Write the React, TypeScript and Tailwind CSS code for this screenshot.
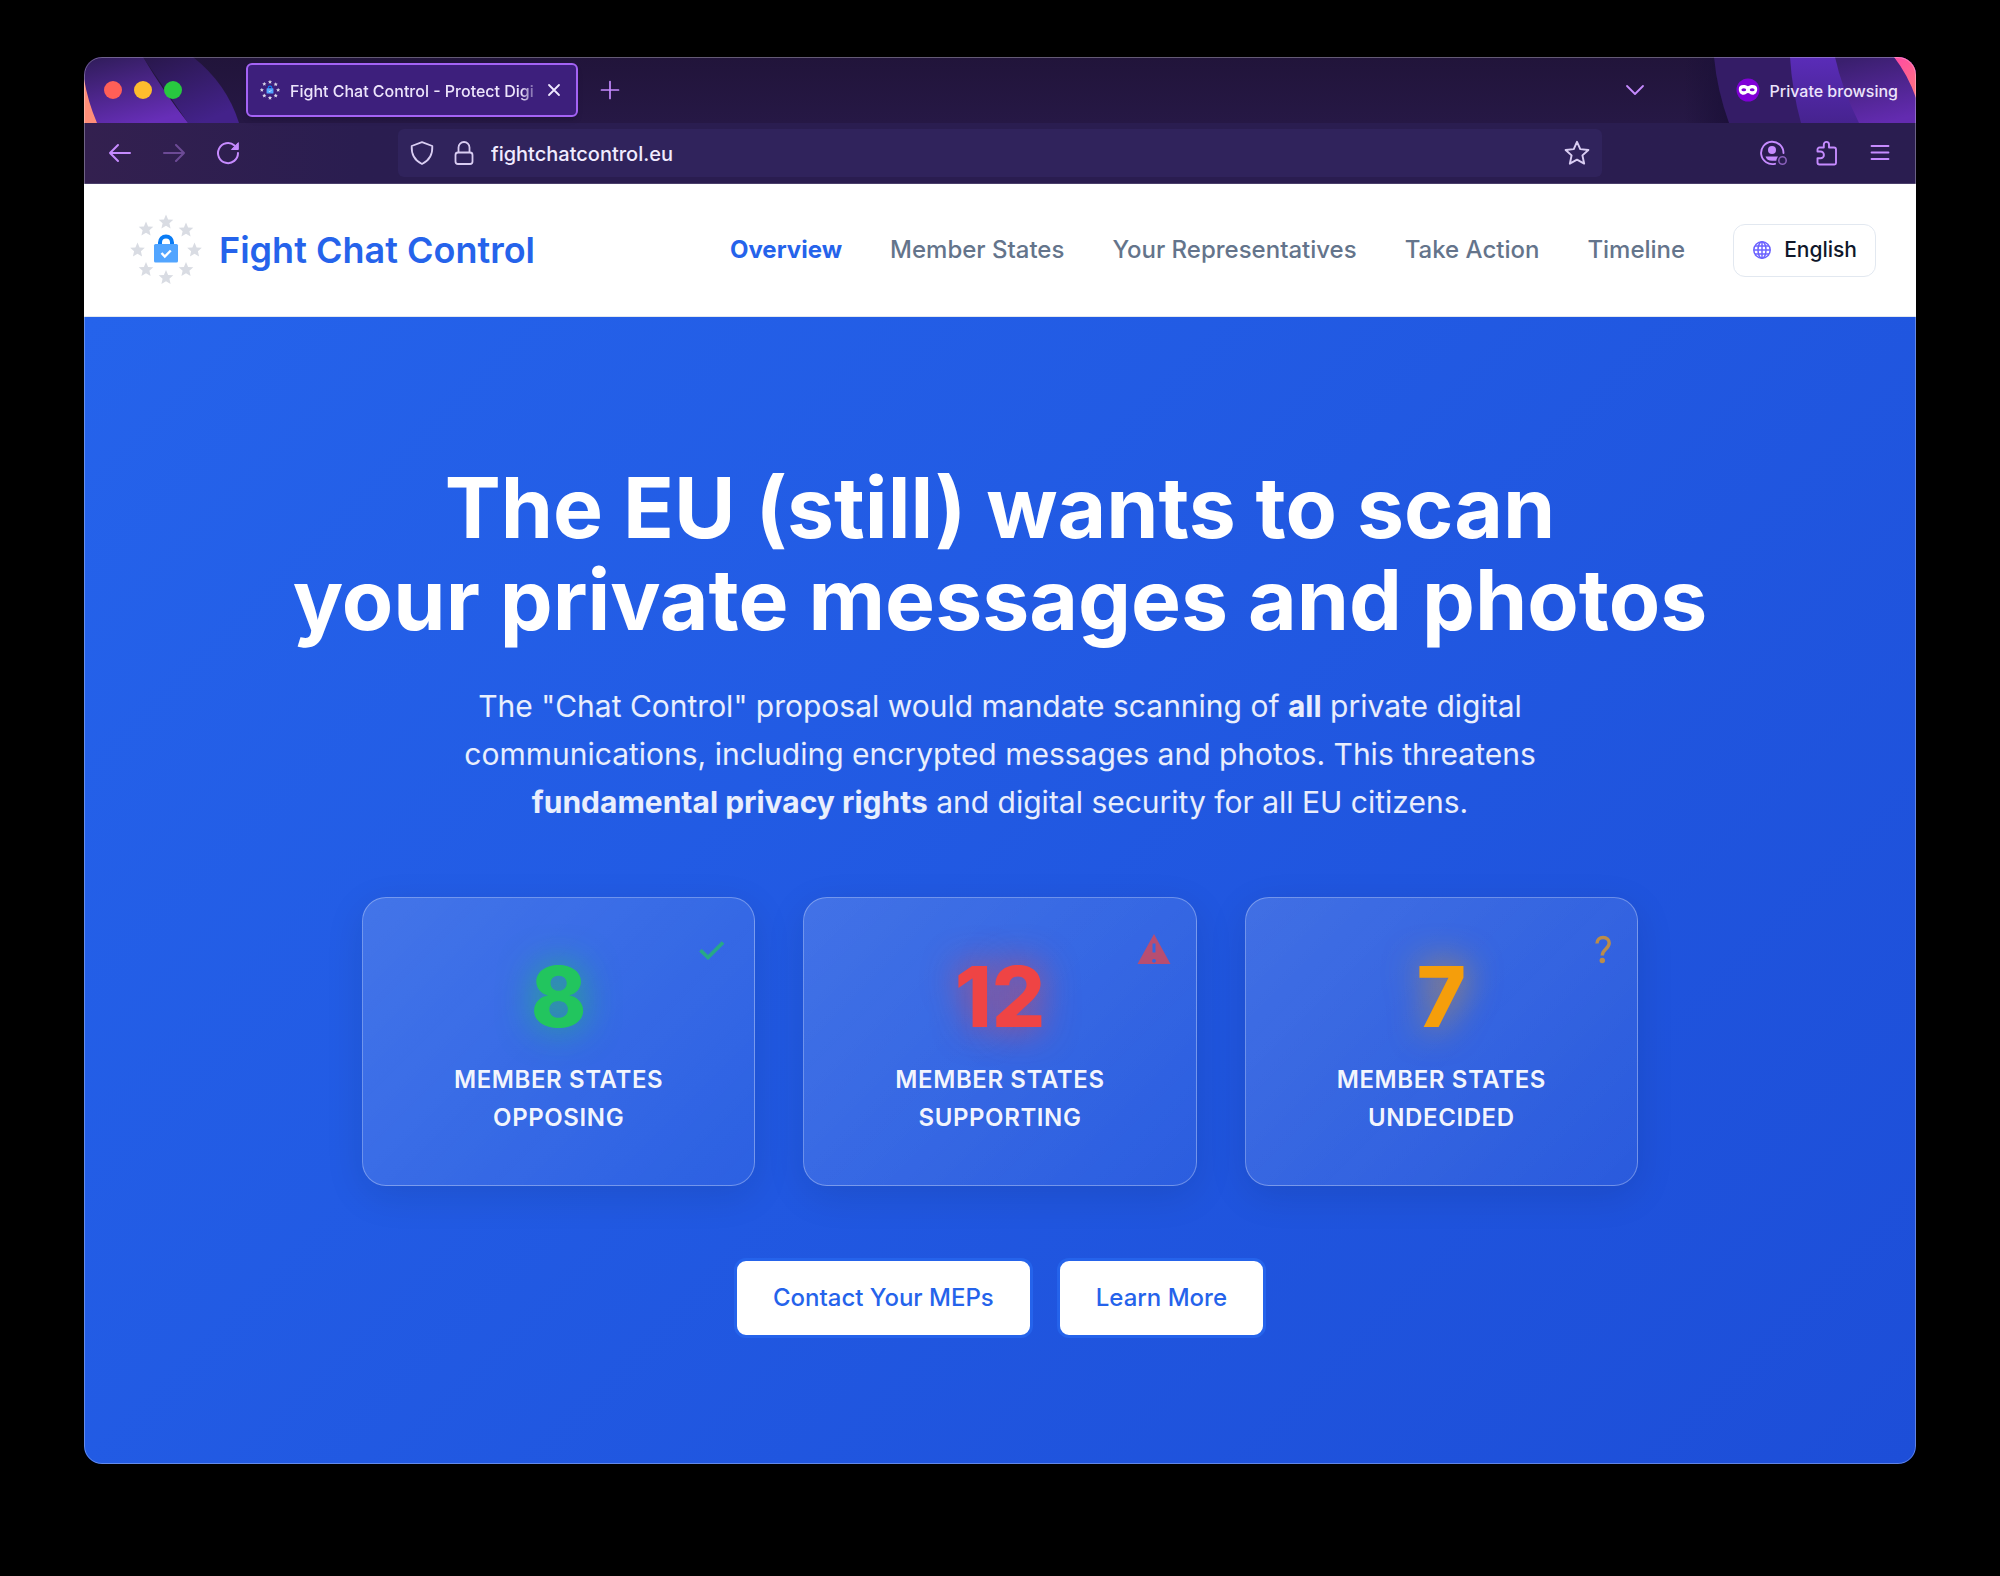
const navItems = ["Overview", "Member States", "Your Representatives", "Take Action", "Timeline"];

const stats = [
  {
    value: "8",
    label: "Opposing",
    number: "text-[#22c55e] [text-shadow:0_0_36px_rgba(34,197,94,0.8)]",
    icon: <CheckIcon />,
  },
  {
    value: "12",
    label: "Supporting",
    number: "text-[#ef4444] [text-shadow:0_0_36px_rgba(239,68,68,0.8)]",
    icon: <WarningIcon />,
  },
  {
    value: "7",
    label: "Undecided",
    number: "text-[#f59e0b] [text-shadow:0_0_36px_rgba(245,158,11,0.8)]",
    icon: <QuestionIcon />,
  },
];

function CheckIcon() {
  return (
    <svg viewBox="0 0 36 36" className="size-9" fill="none" stroke="#22c55e" strokeWidth="3.600">
      <path d="m6.500 18.200 7.500 7.300L29 10.500" />
    </svg>
  );
}

function WarningIcon() {
  return (
    <svg viewBox="0 0 36 36" className="size-9 fill-[#ef4444]">
      <path d="M1.500 32h33L18 2 1.500 32zM19.800 28.200a1.900 1.900 0 1 1-3.600 0 1.900 1.900 0 0 1 3.600 0zM19.500 20.500h-3v-9h3v9z" fillRule="evenodd" />
    </svg>
  );
}

function QuestionIcon() {
  return (
    <svg viewBox="0 0 20 36" className="h-9 w-5">
      <path
        d="M4 11.500c0-4 2.800-6 6.200-6s6 2.200 6 5.600c0 5.800-6.900 6.200-6.900 12.400"
        fill="none"
        stroke="#f59e0b"
        strokeWidth="3.400"
      />
      <circle cx="9.300" cy="28.500" r="2.700" fill="#f59e0b" />
    </svg>
  );
}

const starPath =
  "M0-7.500 2.100-2.600 7.300-2.200 3.400 1.300 4.600 6.500 0 3.800-4.600 6.500-3.400 1.300-7.300-2.200-2.100-2.600z";

const starSpots = [
  [42, 14], [62, 22], [70.5, 42], [62, 61.5], [42, 69.500], [22, 61.5], [13.500, 42], [22, 21],
];

function Logo({ className, star }: { className: string; star: string }) {
  return (
    <svg viewBox="0 0 84 84" className={className} aria-hidden="true">
      {starSpots.map(([x, y]) => (
        <path key={`${x}-${y}`} d={starPath} transform={`translate(${x} ${y})`} fill={star} />
      ))}
      <path d="M36 37v-2.500a6 6 0 0 1 12 0V37" fill="none" stroke="#0a7cf5" strokeWidth="4" />
      <rect x="30" y="36" width="24" height="18.500" rx="1.500" fill="#52a5ff" />
      <path d="m37.500 45 3.300 3.500 6-6" fill="none" stroke="#fff" strokeWidth="2.400" />
    </svg>
  );
}

function GlobeIcon() {
  return (
    <svg viewBox="0 0 20 20" className="size-5" fill="none" stroke="#6c63ff" strokeWidth="1.500">
      <circle cx="10" cy="10" r="8.200" />
      <ellipse cx="10" cy="10" rx="4" ry="8.200" />
      <path d="M10 1.800v16.400M1.800 10h16.400M3 6h14M3 14h14" />
    </svg>
  );
}

function TabBar() {
  return (
    <div className="relative flex h-[66px] items-center bg-gradient-to-b from-[#21143a] to-[#261845]">
      {/* theme artwork behind the bar's content */}
      <svg className="absolute left-0 top-0 h-[66px] w-[160px]" viewBox="0 0 160 66" aria-hidden="true">
        <defs>
          <linearGradient id="bandA" x1="0.2" y1="0" x2="0.6" y2="1">
            <stop offset="0" stopColor="#321d5e" />
            <stop offset="1" stopColor="#672eb8" />
          </linearGradient>
          <linearGradient id="bandB" x1="0" y1="0" x2="0.6" y2="1">
            <stop offset="0" stopColor="#28174a" />
            <stop offset="1" stopColor="#43228a" />
          </linearGradient>
        </defs>
        <path d="M59 0h50q34 27 46 66h-51z" fill="url(#bandB)" />
        <path d="M0 0h59q20 34 45 66H0z" fill="url(#bandA)" />
        <path d="M0 22q4 23 13 44H0z" fill="#ff8e78" />
      </svg>
      <svg className="absolute right-0 top-0 h-[66px] w-[232px]" viewBox="0 0 232 66" aria-hidden="true">
        <defs>
          <linearGradient id="shade">
            <stop offset="0" stopColor="#1b1038" stopOpacity="0" />
            <stop offset="1" stopColor="#1b1038" />
          </linearGradient>
          <linearGradient id="bandC" x1="0" y1="0" x2="0" y2="1">
            <stop offset="0" stopColor="#5a2cb8" />
            <stop offset="1" stopColor="#46238f" />
          </linearGradient>
          <linearGradient id="bandD" x1="0.3" y1="0" x2="0.6" y2="1">
            <stop offset="0" stopColor="#3a1f6e" />
            <stop offset="1" stopColor="#632bb0" />
          </linearGradient>
          <linearGradient id="bandE" x1="0" y1="0" x2="0.5" y2="1">
            <stop offset="0" stopColor="#ff4aa5" />
            <stop offset="1" stopColor="#ff6f83" />
          </linearGradient>
        </defs>
        <path d="M0 0h50v66H0z" fill="url(#shade)" />
        <path d="M30 0h202v66H45Q33 33 30 0z" fill="#341c66" />
        <path d="M106 0h126v66H117Q108 33 106 0z" fill="url(#bandC)" />
        <path d="M151 0h81v66h-57Q158 32 151 0z" fill="url(#bandD)" />
        <path d="M210 0h22v41Q224 18 210 0z" fill="url(#bandE)" />
      </svg>

      <div className="relative flex w-[162px] items-center gap-3 pl-5">
        <button aria-label="Close window" className="size-[18px] rounded-full bg-[#ff5f57]" />
        <button aria-label="Minimise window" className="size-[18px] rounded-full bg-[#febc2e]" />
        <button aria-label="Zoom window" className="size-[18px] rounded-full bg-[#28c840]" />
      </div>

      <div className="relative flex h-[54px] w-[332px] items-center rounded-md border-2 border-[#a463f5] bg-[#3d1f7c] pl-[10px] pr-[14px] shadow-md">
        <Logo className="mr-2 size-6 shrink-0" star="#d9d5e8" />
        <span className="min-w-0 flex-1 overflow-hidden whitespace-nowrap pt-[2px] text-[16px] font-medium text-[#ece4fb] [mask-image:linear-gradient(to_right,#000_92%,transparent)]">
          Fight Chat Control - Protect Digi
        </span>
        <button aria-label="Close tab" className="ml-[5px] text-[#f0e9ff]">
          <svg viewBox="0 0 16 16" className="size-4" fill="none" stroke="currentColor" strokeWidth="1.800" strokeLinecap="round">
            <path d="m3 3 10 10M13 3 3 13" />
          </svg>
        </button>
      </div>

      <button aria-label="New tab" className="relative ml-[22px] text-[#c68bff]">
        <svg viewBox="0 0 20 20" className="size-5" fill="none" stroke="currentColor" strokeWidth="1.700" strokeLinecap="round">
          <path d="M10 1.500v17M1.500 10h17" />
        </svg>
      </button>

      <button aria-label="List all tabs" className="relative ml-auto mr-[91px] text-[#c68bff]">
        <svg viewBox="0 0 20 20" className="size-5" fill="none" stroke="currentColor" strokeWidth="1.800" strokeLinecap="round" strokeLinejoin="round">
          <path d="m2 6 8 8 8-8" />
        </svg>
      </button>

      <div className="relative flex items-center gap-[10px] pr-[18px]">
        <svg viewBox="0 0 24 24" className="size-6" aria-hidden="true">
          <circle cx="12" cy="12" r="11.500" fill="#8000d7" />
          <path
            d="M12 8.300C10.500 7.300 9 7 7.300 7 4.500 7 2.800 8.300 2.800 11c0 3.300 1.900 5.800 4.600 5.800 2.300 0 2.900-1.900 4.600-1.900s2.300 1.900 4.600 1.900c2.700 0 4.600-2.500 4.600-5.800 0-2.700-1.700-4-4.500-4-1.700 0-3.200.3-4.700 1.300z"
            fill="#fff"
          />
          <ellipse cx="7.800" cy="11.800" rx="2.400" ry="1.500" fill="#8000d7" />
          <ellipse cx="16.200" cy="11.800" rx="2.400" ry="1.500" fill="#8000d7" />
        </svg>
        <span className="pt-[2px] text-[16px] font-medium text-[#ece4fb]">Private browsing</span>
      </div>
    </div>
  );
}

function Toolbar() {
  return (
    <div className="flex h-[61px] items-center border-b border-[#4a3f6b] bg-gradient-to-r from-[#33204f] via-[#2a1d50] via-15% to-[#2a1d50] text-[#c68bff]">
      <div className="flex w-[314px] items-center gap-[30px] pl-6">
        <button aria-label="Back">
          <svg viewBox="0 0 24 24" className="size-6" fill="none" stroke="currentColor" strokeWidth="2" strokeLinecap="round" strokeLinejoin="round">
            <path d="M22 12H2m8-8-8 8 8 8" />
          </svg>
        </button>
        <button aria-label="Forward" className="opacity-40">
          <svg viewBox="0 0 24 24" className="size-6" fill="none" stroke="currentColor" strokeWidth="2" strokeLinecap="round" strokeLinejoin="round">
            <path d="M2 12h20m-8-8 8 8-8 8" />
          </svg>
        </button>
        <button aria-label="Reload">
          <svg viewBox="0 0 24 24" className="size-6" fill="none" stroke="currentColor" strokeWidth="2" strokeLinecap="round">
            <path d="M22 12A10 10 0 1 1 18.500 4.500" />
            <path d="M22.300 2v6.500h-6.500z" fill="currentColor" strokeWidth="1" strokeLinejoin="round" />
          </svg>
        </button>
      </div>

      <div className="flex h-12 min-w-0 flex-1 items-center rounded-md bg-[#30235c] px-3 text-[#d9cdf2]">
        <svg viewBox="0 0 24 24" className="size-6 shrink-0" fill="none" stroke="currentColor" strokeWidth="1.800" strokeLinejoin="round">
          <path d="M12 1.200 22.300 5c.4 7.500-2 14-10.300 18C3.700 19 1.300 12.500 1.700 5z" />
        </svg>
        <svg viewBox="0 0 24 24" className="ml-[18px] size-6 shrink-0" fill="none" stroke="currentColor" strokeWidth="1.800">
          <rect x="3.500" y="11.500" width="17" height="11.500" rx="2.500" />
          <path d="M6.500 11.500V6.500a5.500 5.500 0 0 1 11 0v5" />
        </svg>
        <input
          type="text"
          aria-label="Address"
          defaultValue="fightchatcontrol.eu"
          className="ml-[15px] min-w-0 flex-1 bg-transparent pt-[2px] text-[20px] font-medium text-[#f1ebff] outline-none"
        />
        <button aria-label="Bookmark this page">
          <svg viewBox="0 0 24 24" className="size-[26px]" fill="none" stroke="currentColor" strokeWidth="1.800" strokeLinejoin="round">
            <path d="m12 1.700 3 6.700 7.500.8-5.500 5 1.600 7.600L12 18.200l-6.600 3.600L7 14.200l-5.500-5L9 8.400z" />
          </svg>
        </button>
      </div>

      <div className="flex w-[314px] items-center justify-end gap-7 pr-6">
        <button aria-label="Account">
          <svg viewBox="0 0 28 26" className="h-[26px] w-7" fill="none">
            <path d="M24.500 13A11.200 11.200 0 1 0 16 23.800" stroke="currentColor" strokeWidth="1.900" strokeLinecap="round" />
            <circle cx="13" cy="10" r="4" fill="currentColor" />
            <path d="M6.500 16.500h12.500c-.8 1.500-1.500 2.300-1.700 4.300H13c-3.500 0-5.800-1.600-6.500-4.300z" fill="currentColor" />
            <circle cx="23.500" cy="20.500" r="3.700" stroke="currentColor" strokeWidth="1.600" opacity="0.600" />
          </svg>
        </button>
        <button aria-label="Extensions">
          <svg viewBox="0 0 24 26" className="h-[26px] w-6" fill="none" stroke="currentColor" strokeWidth="1.900" strokeLinejoin="round">
            <path d="M2.500 11.500V9.500A2 2 0 0 1 4.500 7.500H8.800V4.500a2.600 2.600 0 0 1 5.200 0v3H19a2 2 0 0 1 2 2v13.500a1.500 1.500 0 0 1-1.500 1.500H4.500a2 2 0 0 1-2-2V18.300H5.500a3.300 3.300 0 0 0 0-6.800z" />
          </svg>
        </button>
        <button aria-label="Menu" className="ml-px">
          <svg viewBox="0 0 24 24" className="size-6" fill="none" stroke="currentColor" strokeWidth="1.800" strokeLinecap="round">
            <path d="M3.500 5h17M3.500 11.500h17M3.500 18h17" />
          </svg>
        </button>
      </div>
    </div>
  );
}

function SiteHeader() {
  return (
    <header className="flex h-[133px] items-center justify-between border-b border-[#e2e8f0] bg-white px-10">
      <a href="#home" className="flex items-center gap-[11px]">
        <Logo className="size-[84px]" star="#d9dce3" />
        <span className="text-[36px] font-semibold text-[#2563eb]">Fight Chat Control</span>
      </a>
      <nav className="flex items-center gap-12 text-[24px]">
        {navItems.map((item, i) => (
          <a
            key={item}
            href="#section"
            className={i === 0 ? "font-bold text-[#2563eb]" : "font-medium text-[#64748b]"}
          >
            {item}
          </a>
        ))}
        <button className="flex h-[53px] items-center gap-3 rounded-xl border border-[#e2e8f0] px-[18px] text-[21px] font-medium text-[#0f172a]">
          <GlobeIcon />
          English
        </button>
      </nav>
    </header>
  );
}

function Hero() {
  return (
    <main className="flex flex-col items-center bg-[linear-gradient(135deg,#2563eb,#1d4ed8)] px-10 pb-[126px] pt-[145px] text-center text-white">
      <h1 className="text-[84px] font-bold leading-[92px]">
        The EU (still) wants to scan
        <br />
        your private messages and photos
      </h1>
      <p className="mt-9 max-w-[1100px] text-[30px] leading-[48px] text-white/90">
        The "Chat Control" proposal would mandate scanning of <strong>all</strong> private digital
        communications, including encrypted messages and photos. This threatens{" "}
        <strong>fundamental privacy rights</strong> and digital security for all EU citizens.
      </p>

      <div className="mt-[71px] grid w-full max-w-[1276px] grid-cols-3 gap-12">
        {stats.map((s) => (
          <section
            key={s.label}
            className="relative rounded-3xl border border-white/30 bg-[linear-gradient(135deg,rgba(255,255,255,0.15),rgba(255,255,255,0.05))] px-9 pb-12 pt-[57px] shadow-[0_10px_38px_rgba(0,0,0,0.1)]"
          >
            <div className="absolute right-6 top-[34px] opacity-70">{s.icon}</div>
            <p className={`text-[84px] font-extrabold leading-[84px] ${s.number}`}>{s.value}</p>
            <p className="mt-[22px] text-[24px] font-semibold uppercase leading-[38px] tracking-wide text-white/95">
              Member States
              <br />
              {s.label}
            </p>
          </section>
        ))}
      </div>

      <div className="mt-[72px] flex gap-6">
        {["Contact Your MEPs", "Learn More"].map((label) => (
          <a
            key={label}
            href="#action"
            className="flex h-20 items-center rounded-xl border-[3px] border-[#2563eb] bg-white px-9 text-[24px] font-medium text-[#2563eb]"
          >
            {label}
          </a>
        ))}
      </div>
    </main>
  );
}

export default function App() {
  return (
    <div className="min-h-screen bg-black px-[84px] pb-[111px] pt-[57px] font-['Inter',sans-serif]">
      <div className="relative overflow-hidden rounded-[18px]">
        <TabBar />
        <Toolbar />
        <SiteHeader />
        <Hero />
        {/* hairline around the whole window */}
        <div className="pointer-events-none absolute inset-0 rounded-[18px] border border-white/30" />
      </div>
    </div>
  );
}
